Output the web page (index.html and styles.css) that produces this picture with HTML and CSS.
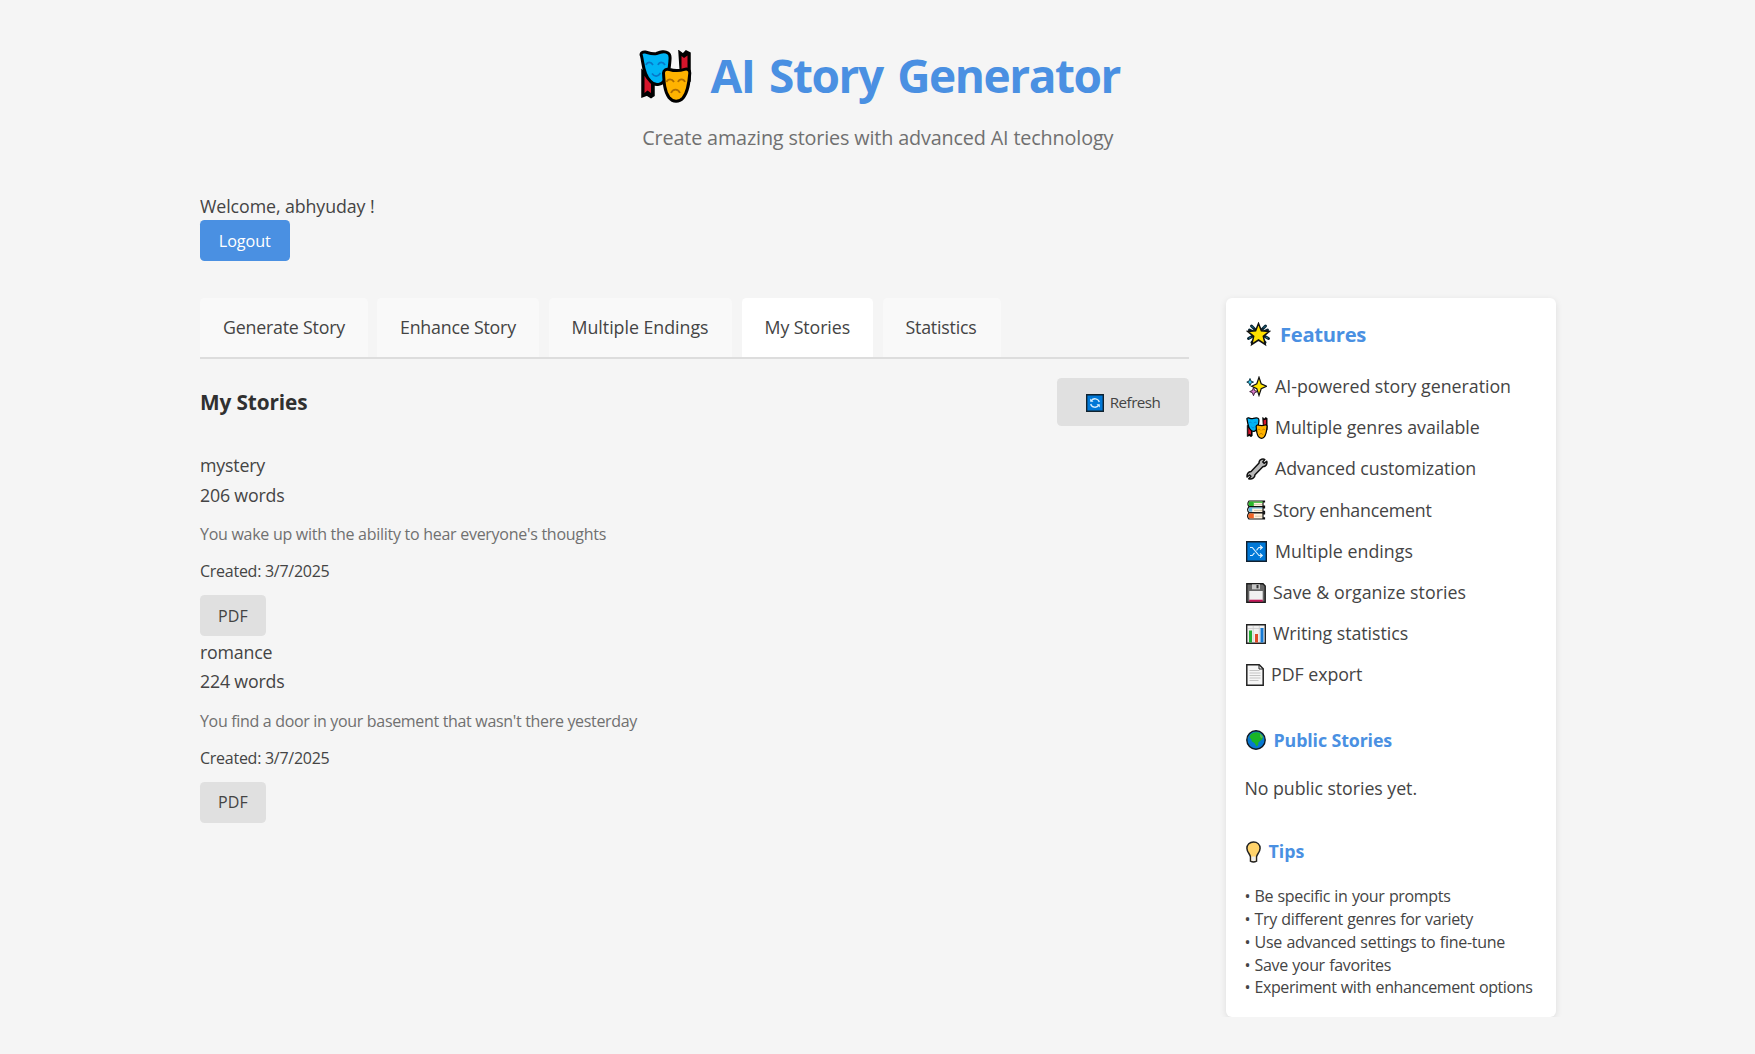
FILE: index.html
```html
<!DOCTYPE html>
<html lang="en">
<head>
<meta charset="utf-8">
<title>AI Story Generator</title>
<link rel="stylesheet" href="styles.css">
</head>
<body>
<svg class="defs" aria-hidden="true">
  <symbol id="masks" viewBox="0 0 53 53">
    <path d="M3 20V47l5-2 4 2.500 3-2V30zM40 1l4 3 3-3 4 2v28h-9z" fill="#000" stroke="#000" stroke-width="1.500"/>
    <path d="M5.500 26V43l3-2.500 3.500 2.500V30zM42.500 6l2.500 2 3.500-2.500V28h-6z" fill="#d5152b"/>
    <path d="M2.500 6C1 3 4 1.500 6.500 2c4 1.200 7 2.500 11 1.500 4-1.500 8-3 11.500-.5 3 1.500 2 5 1.900 8-.5 6-.7 12-3.700 17-3.500 7-11 9-16 3C4 24 4.500 14 2.500 6z" fill="#00b4f5" stroke="#000" stroke-width="3"/>
    <path d="M7 15c1.500-3.500 5-3.500 7 0M19 15c1.500-3.500 5-3.500 7 0M13 23.500c2.500 3.500 6 3.500 8.500-.5" fill="none" stroke="#0778c8" stroke-width="1.700"/>
    <path d="M24.500 23c0-3 3-4.500 6-3.500 5 1.500 10 1.500 15-.2 3-1 5.500.7 5.300 3.700C50 33 49 42 44 48c-4 4.500-10 4.500-14-.5-4.500-6-5-15-5.500-24.500z" fill="#ffb300" stroke="#000" stroke-width="3"/>
    <path d="M27.500 32c1.500-3.500 5.500-3.500 7.500 0M39 32c1.500-3.500 5.500-3.500 7 0M32 43c2-4.500 7-4.500 9 0" fill="none" stroke="#b06e00" stroke-width="1.800"/>
  </symbol>
</svg>
<div class="page">
  <header class="header">
    <h1 class="title"><svg class="title-icon"><use href="#masks"/></svg><span>AI Story Generator</span></h1>
    <p class="subtitle">Create amazing stories with advanced AI technology</p>
  </header>

  <section class="user">
    <p class="welcome">Welcome, abhyuday !</p>
    <button class="btn btn-primary">Logout</button>
  </section>

  <div class="layout">
    <main>
      <nav class="tabs">
        <button class="tab tab-generate">Generate Story</button>
        <button class="tab tab-enhance">Enhance Story</button>
        <button class="tab tab-endings">Multiple Endings</button>
        <button class="tab tab-stories active">My Stories</button>
        <button class="tab tab-stats">Statistics</button>
      </nav>
      <div class="section-head">
        <h2>My Stories</h2>
        <button class="btn btn-refresh">
          <svg width="18" height="18" viewBox="0 0 18 18"><path d="M.7.700h16.600v16.600H.7z" fill="#0078d7" stroke="#10222f" stroke-width="1.400"/><path d="M5.200 6.800A4.500 4.500 0 0 1 13.300 8M12.800 11.200A4.500 4.500 0 0 1 4.700 10" fill="none" stroke="#d9f0ff" stroke-width="1.300"/><path d="M4.200 4.500v3.300h3.300zM13.800 13.500v-3.300h-3.300z" fill="#d9f0ff"/></svg>
          <span>Refresh</span>
        </button>
      </div>
      <article class="story">
        <div class="line">mystery</div>
        <div class="line">206 words</div>
        <p class="prompt">You wake up with the ability to hear everyone's thoughts</p>
        <p class="created">Created: 3/7/2025</p>
        <button class="btn btn-pdf">PDF</button>
      </article>
      <article class="story">
        <div class="line">romance</div>
        <div class="line">224 words</div>
        <p class="prompt prompt-long">You find a door in your basement that wasn't there yesterday</p>
        <p class="created">Created: 3/7/2025</p>
        <button class="btn btn-pdf">PDF</button>
      </article>
    </main>

    <aside class="sidebar">
      <h3 class="features-title">
        <svg width="25" height="25" viewBox="0 0 25 25"><path d="M5.500 4l3.500 3.500M19.500 4L16 7.500M2.500 16.500l3.500-2M22.500 16.500l-3.500-2M3.500 8l4 2M21.500 8l-4 2M6 20.500L9 17M19 20.500L16 17" fill="none" stroke="#0b2634" stroke-width="3" stroke-linecap="round"/><path d="M5.500 4l2 2M19.500 4l-2 2M3 16.200l2-1M22 16.200l-2-1" stroke="#1d7795"/><path d="M12.500 1.500l2.900 7.300 8 .6-6.100 5 2 8.100-6.800-4.500-6.800 4.500 2-8.100-6.100-5 8-.6z" fill="#ffe000" stroke="#111" stroke-width="1.500"/></svg>
        <span>Features</span>
      </h3>
      <ul class="features">
        <li><svg width="21" height="21" viewBox="0 0 21 21"><path d="M4 2.500l1 2.600 2.500 1-2.500 1-1 2.600-1-2.600L.8 6.100l2.200-1z" fill="#35c5ef" stroke="#163b4a"/><path d="M7.500 11.500l1.100 3 2.800 1.100-2.800 1.100-1.100 3-1.100-3-2.700-1.100 2.700-1.100z" fill="#d879c8" stroke="#40203a"/><path d="M13 1.200l2.200 6.600 5.300 2.500-5.300 2.500-2.200 6.600-2.200-6.600-5.100-2.500 5.100-2.500z" fill="#ffe500" stroke="#111" stroke-width="1.200"/></svg><span>AI-powered story generation</span></li>
        <li><svg width="22" height="22"><use href="#masks"/></svg><span>Multiple genres available</span></li>
        <li><svg width="22" height="22" viewBox="0 0 22 22"><path d="M14 2.200C16 .8 18 1 18.800 1.600L16.800 4l1.300 1.300 2.600-2C21.500 6 20 8.600 16.800 8.800L9 16.800c0 3-2.800 4.700-6.300 3.900l2.200-2.400L3.600 17l-2.500 2C.7 16 2.300 13.600 5.100 13.400l8-8.400C13 4 13.200 3 14 2.200z" fill="#b9b9b9" stroke="#111" stroke-width="1.500" stroke-linejoin="round"/></svg><span>Advanced customization</span></li>
        <li><svg width="20" height="20" viewBox="0 0 20 20"><g stroke="#111" stroke-width="1.200"><path d="M3 1h15.500v1H17v4h1.500v.6H3Q.8 3.800 3 1z" fill="#fff3df"/><path d="M3 7h15.500v.8H17v3.600h1.500v1.200H3Q.2 9.800 3 7z" fill="#fff3df"/><path d="M3 12.800h15.500v1.200H17v3.800h1.500V19H3Q.2 16 3 12.800z" fill="#fff3df"/></g><path d="M3.200 1.600h4.600v4.400H3.200Q1.800 3.800 3.200 1.600z" fill="#2bb52b"/><path d="M7.800 1.600h9v1.200h-9z" fill="#2bb52b"/><path d="M3.200 7.600h13v1H6.200v3.200h-3Q1.700 9.800 3.200 7.600z" fill="#63b3e0"/><path d="M3.200 13.500h4.600v4.800H3.200Q1.300 16 3.200 13.500z" fill="#f06425"/><path d="M8 4.600h8M8 10.500h8M9 16.200h7" stroke="#cbbd9f" stroke-width=".8"/></svg><span>Story enhancement</span></li>
        <li><svg width="21" height="21" viewBox="0 0 21 21"><path d="M.7.700h19.600v19.600H.7z" fill="#0078d7" stroke="#102030" stroke-width="1.400"/><path d="M4 6.500h2.300L13 14.500h3M4 14.500h2.300l2.200-2.700M10.500 9.300l2.300-2.800H16M14 4.500l2.300 2-2.300 2M14 12.500l2.300 2-2.300 2" fill="none" stroke="#dff3ff" stroke-width="1.100"/></svg><span>Multiple endings</span></li>
        <li><svg width="20" height="20" viewBox="0 0 20 20"><path d="M.8.800H17l2.200 2.200v16.200H.8z" fill="#666" stroke="#1c1c1c" stroke-width="1.400"/><path d="M6 1.300h8v5H6z" fill="#c8c8c8"/><path d="M10.500 2h2v3.300h-2z" fill="#333"/><path d="M3.300 8h13.400v9.500H3.300z" fill="#f1f1f1"/><path d="M3.300 16.700h13.400v2H3.300z" fill="#c41457"/></svg><span>Save &amp; organize stories</span></li>
        <li><svg width="20" height="20" viewBox="0 0 20 20"><path d="M.7.700h18.600v18.600H.7z" fill="#f1f1f1" stroke="#222" stroke-width="1.400"/><path d="M7.200 2v16M13.300 2v16M2 4.500h16" stroke="#c9c9c9" stroke-width=".7"/><path d="M3 6.500h3v12H3z" fill="#23ad35"/><path d="M9 10h3v8.500H9z" fill="#e04a27"/><path d="M14.500 4h3v14.500h-3z" fill="#1679d3"/></svg><span>Writing statistics</span></li>
        <li><svg width="18" height="22" viewBox="0 0 18 22"><path d="M.8.800h12.400l4 4v16.400H.8z" fill="#f6f6f6" stroke="#222" stroke-width="1.500"/><path d="M13 1v4h4" fill="none" stroke="#222"/><path d="M3.500 6.500h10M3.500 9h11M3.500 11.500h11M3.500 14h11M3.500 16.500h9" stroke="#c4c4c4"/></svg><span>PDF export</span></li>
      </ul>
      <h4 class="public-title">
        <svg width="20" height="20" viewBox="0 0 20 20"><circle cx="10" cy="10" r="9.200" fill="#0878d0" stroke="#101820" stroke-width="1.400"/><path d="M4.500 4.500Q8 1.500 13 2.500l3.200 2.800.5 3.500-2.200 2-2 1.500-.5 3.200-1.500 1L8.500 13 6 11.500 5 9 3.500 7.500z" fill="#19b526"/><path d="M14 3.500l3 3-1 2-2-1.500z" fill="#57b64a"/></svg>
        <span>Public Stories</span>
      </h4>
      <p class="public-empty">No public stories yet.</p>
      <h4 class="tips-title">
        <svg width="15" height="22" viewBox="0 0 15 22"><path d="M4.500 16C4.500 13.500.9 11.500.9 7.300.9 3.500 3.700.9 7.500.9s6.600 2.600 6.600 6.400c0 4.200-3.600 6.200-3.600 8.700v4.200q-3 1.600-6 0z" fill="#ffd36b" stroke="#222" stroke-width="1.500"/><path d="M5.400 15.500h4.200v4.200q-2.100.8-4.200 0z" fill="#eee"/></svg>
        <span>Tips</span>
      </h4>
      <div class="tips">
        <div>• Be specific in your prompts</div>
        <div>• Try different genres for variety</div>
        <div>• Use advanced settings to fine-tune</div>
        <div>• Save your favorites</div>
        <div>• Experiment with enhancement options</div>
      </div>
    </aside>
  </div>
</div>
</body>
</html>
```
FILE: styles.css
```css
* { box-sizing: border-box; margin: 0; padding: 0; }
body {
  background: #f5f5f5;
  color: #444;
  font-family: "Open Sans", "Noto Sans", sans-serif;
  font-size: 17.8px;
  line-height: 29.6px;
}
svg { display: block; flex: none; }
.defs { position: absolute; width: 0; height: 0; }
button { font: inherit; color: inherit; border: 0; }
.page { width: 1355.5px; margin-left: 200px; }

.header { padding-top: 40px; }
.title {
  display: flex; justify-content: center; align-items: center; gap: 18px;
  height: 72px; padding-left: 4px;
  color: #4a90e2; font-size: 46px; font-weight: 700; letter-spacing: -1.45px; word-spacing: 4px;
}
.title-icon { width: 53px; height: 53px; margin-top: 1px; }
.subtitle {
  margin-top: 10px; text-align: center; color: #707070;
  font-size: 19.8px; line-height: 32px; letter-spacing: -.155px;
}

.user { margin-top: 37px; }
.welcome { height: 29px; line-height: 31px; letter-spacing: -.09px; }
.btn {
  display: flex; align-items: center; justify-content: center;
  height: 41px; padding-top: 2px; border-radius: 4.600px; background: #e0e0e0;
}
.btn-primary { width: 89.5px; background: #4a90e2; color: #fff; font-size: 16.2px; letter-spacing: -.07px; }
.btn-pdf { width: 66px; font-size: 16px; letter-spacing: .1px; }

.layout { display: grid; grid-template-columns: 989px 329.5px; gap: 37px; margin-top: 37px; align-items: start; }
.tabs { display: flex; gap: 9.500px; height: 61px; border-bottom: 2px solid #ddd; }
.tab { padding: 0 0 0 23px; text-align: left; background: #f9f9f9; border-radius: 4.600px 4.600px 0 0; letter-spacing: -.21px; }
.tab.active { background: #fff; }
.tab-generate { width: 167.5px; }
.tab-enhance { width: 162px; }
.tab-endings { width: 183.5px; letter-spacing: -.02px; }
.tab-stories { width: 131.5px; letter-spacing: -.1px; }
.tab-stats { width: 118px; }

.section-head { display: flex; justify-content: space-between; align-items: center; margin: 19px 0 25px; }
h2 { padding-top: 2px; color: #303030; font-size: 20.8px; letter-spacing: -.11px; }
.btn-refresh { width: 132px; height: 48px; gap: 6px; font-size: 15.2px; letter-spacing: -.55px; }

.line { letter-spacing: -.2px; }
.prompt { margin-top: 11px; color: #707070; font-size: 16px; line-height: 26px; letter-spacing: -.276px; }
.prompt-long { letter-spacing: -.325px; }
.created { margin: 11px 0; font-size: 16px; line-height: 26px; letter-spacing: -.262px; }
.story { height: 186.600px; }

.sidebar { height: 719px; padding: 19.600px 20px 18px; background: #fff; border-radius: 6px; box-shadow: 0 2px 7px rgba(0, 0, 0, .1); }
.sidebar h3, .sidebar h4, .features li { display: flex; align-items: center; }
.sidebar h3, .sidebar h4 { color: #4a90e2; }
.sidebar h3 { height: 34px; gap: 9px; font-size: 20.2px; letter-spacing: -.295px; }
.sidebar h4 { height: 30px; gap: 7.500px; font-size: 17.8px; }
.features { margin-top: 14.600px; list-style: none; }
.features li { height: 41.200px; gap: 7px; letter-spacing: -.05px; }
.features li:nth-child(1) { gap: 8px; letter-spacing: -.016px; }
.features li:nth-child(4) { letter-spacing: -.226px; }
.features li:nth-child(5) { gap: 8px; letter-spacing: .033px; }
.features li:nth-child(6) { letter-spacing: .033px; }
.public-title { margin-top: 29.800px; letter-spacing: -.11px; }
.public-empty { margin: 17.600px 0 34.200px -1.500px; line-height: 30px; letter-spacing: -.056px; }
.tips { margin: 18px 0 0 -1.500px; font-size: 16px; line-height: 22.800px; letter-spacing: -.33px; word-spacing: .5px; white-space: nowrap; }
.tips div:nth-child(3) { letter-spacing: -.28px; }
.tips div:nth-child(5) { letter-spacing: -.38px; }
```
